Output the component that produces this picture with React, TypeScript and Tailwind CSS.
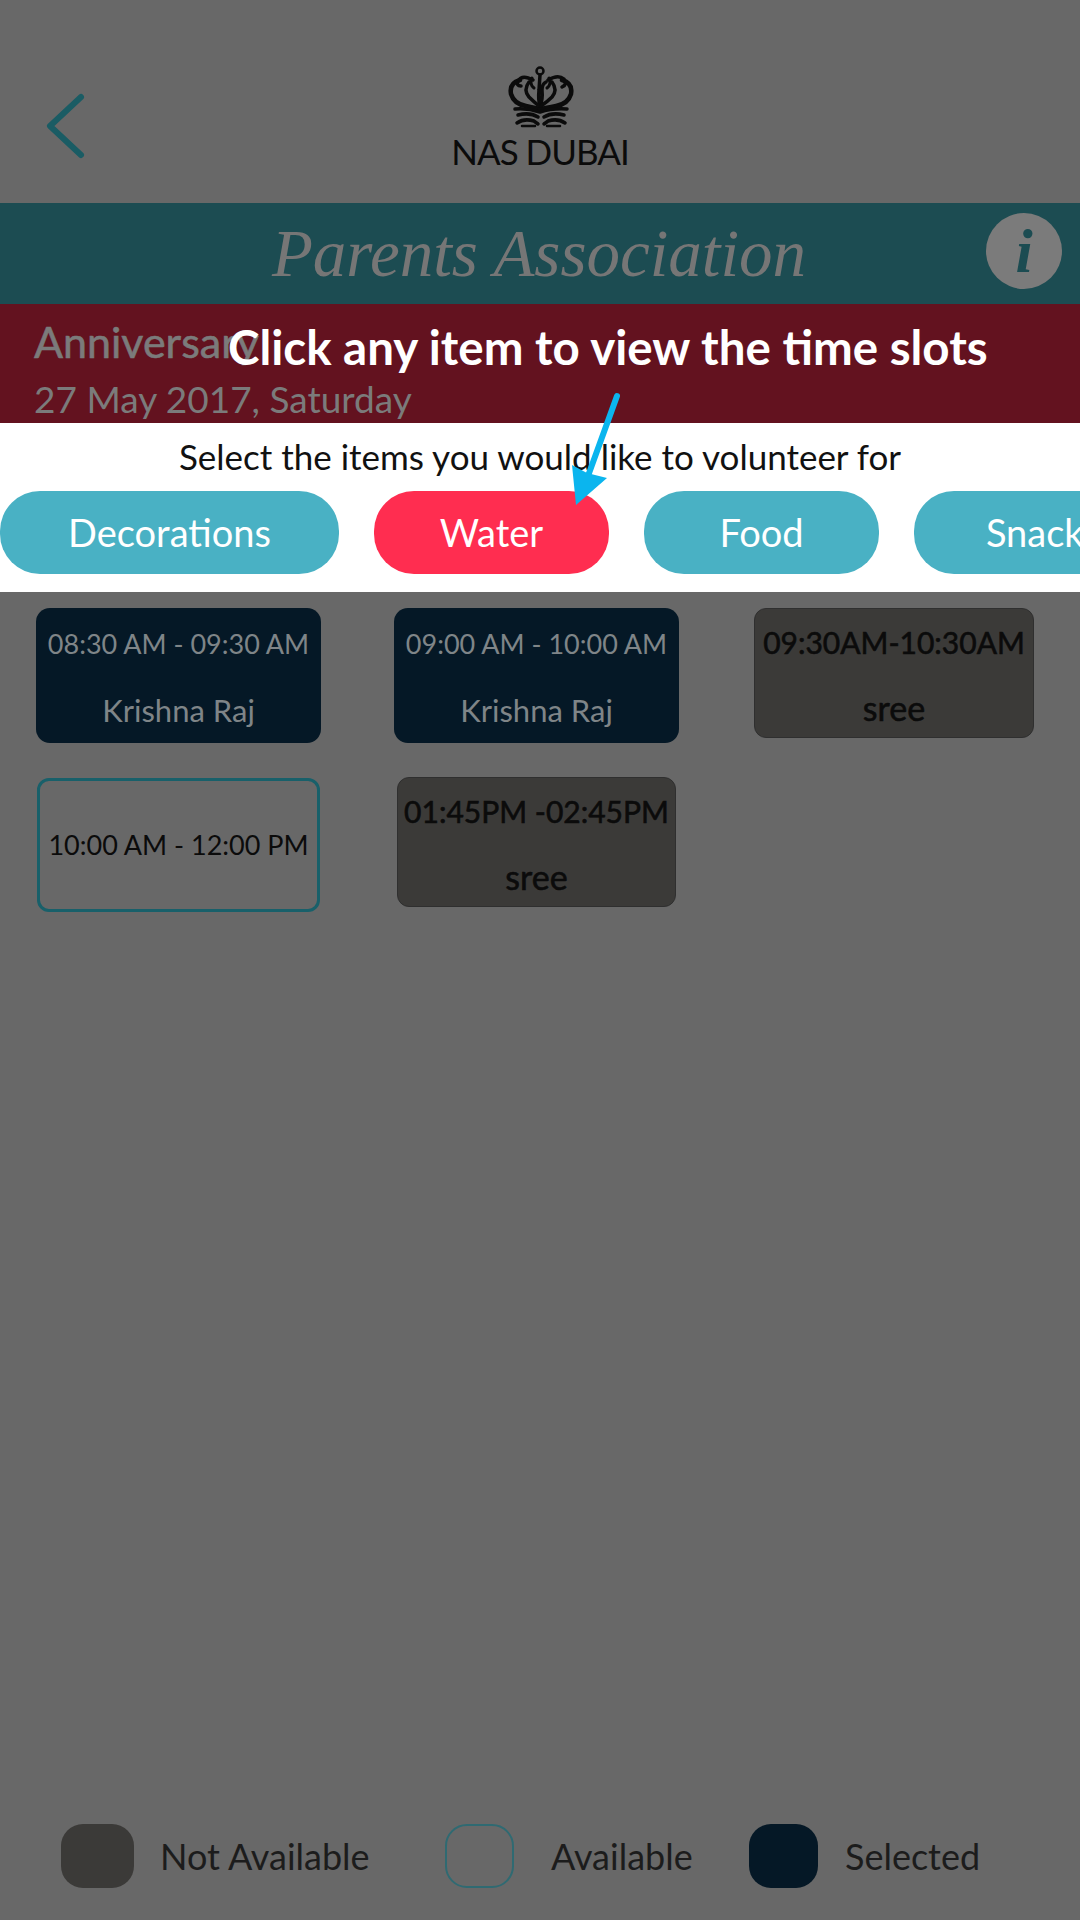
const sans = "font-['Lato','Noto_Sans',sans-serif]";

const Crown = () => (
  <svg width="66" height="62" viewBox="0 0 66 62" fill="none" stroke="#0b0b0b" strokeLinecap="round" className="block">
    <circle cx="32" cy="5" r="3.5" strokeWidth="2.5" />
    <path d="M32 9 L31 24 Q30 34 32 40 Q35 34 34 24 Q34 18 38 16" strokeWidth="3.5" />
    <path d="M25 14 Q14 8 10 15 Q8 20 13 20" strokeWidth="3.5" />
    <path d="M40 14 Q50 8 56 13 Q60 18 54 21" strokeWidth="3.5" />
    <path d="M12 14 Q1 17 3 28 Q6 38 18 40 Q27 42 32 43" strokeWidth="4.5" />
    <path d="M54 14 Q65 17 63 28 Q60 38 48 40 Q38 42 32 43" strokeWidth="4.5" />
    <path d="M21 16 Q15 24 21 31 Q26 36 31 40" strokeWidth="3.5" />
    <path d="M44 16 Q50 24 44 31 Q39 36 33 40" strokeWidth="3.5" />
    <path d="M24 12 Q21 18 26 22" strokeWidth="3" />
    <path d="M41 12 Q44 18 39 22" strokeWidth="3" />
    <path d="M7 43 Q20 42 32 46 Q44 42 59 43" strokeWidth="3.5" />
    <path d="M10 49 Q22 46 30 51 M56 49 Q44 46 36 51" strokeWidth="3.5" />
    <path d="M9 57 Q16 52 26 55 L30 58 M57 57 Q50 52 40 55 L36 58" strokeWidth="3.5" />
    <path d="M14 60 L27 60 M39 60 L52 60" strokeWidth="2.5" />
  </svg>
);

// booked slots (navy)
const BookedSlot = ({ time, name, className }: { time: string; name: string; className: string }) => (
  <div className={`flex flex-col items-center shrink-0 h-[135px] w-[285px] rounded-[14px] bg-[#051826] text-[#7f8588] whitespace-nowrap ${className}`}>
    <span className="mt-[22px] text-[27px] leading-none">{time}</span>
    <span className="mt-[38px] text-[31px] leading-none">{name}</span>
  </div>
);

// slots taken by someone else (dark grey)
const TakenSlot = ({ time, name, className }: { time: string; name: string; className: string }) => (
  <div className={`flex flex-col items-center shrink-0 h-[130px] rounded-[12px] bg-[#3b3a38] border border-[#2f2f2f] text-[#0b0b0b] whitespace-nowrap [-webkit-text-stroke:0.6px_#0b0b0b] ${className}`}>
    <span className="mt-[18px] text-[30px] leading-none">{time}</span>
    <span className="mt-[34px] text-[34px] leading-none">{name}</span>
  </div>
);

const Pill = ({ label, className }: { label: string; className: string }) => (
  <div className={`h-[83px] shrink-0 rounded-[40px] flex items-center justify-center text-white text-[38px] ${className}`}>
    {label}
  </div>
);

export default function App() {
  return (
    <div className={`relative w-[1080px] h-[1920px] overflow-hidden bg-[#686868] flex flex-col ${sans}`}>
      {/* top bar */}
      <div className="h-[203px] shrink-0 relative flex flex-col items-center">
        <svg width="44" height="68" viewBox="0 0 44 68" fill="none" className="absolute left-[44px] top-[92px]">
          <path d="M37 5 L6 34 L37 63" stroke="#1a5c64" strokeWidth="6" strokeLinecap="round" strokeLinejoin="round" />
        </svg>
        <div className="mt-[66px] ml-[1px]">
          <Crown />
        </div>
        <div className="mt-[3px] text-[35px] leading-[40px] tracking-[-1px] text-[#0b0b0b] whitespace-nowrap">NAS DUBAI</div>
      </div>

      {/* title */}
      <div className="h-[101px] shrink-0 bg-[#1c4c52] relative flex items-center justify-center">
        <span className="text-[67px] leading-none italic text-[#767676] font-['Liberation_Serif',serif] mr-[2px]">
          Parents Association
        </span>
        <div className="absolute right-[18px] top-[10px] w-[76px] h-[76px] rounded-full bg-[#7b7b7b] flex items-center justify-center text-[#1c4c52] text-[62px] leading-none font-bold italic font-['Liberation_Serif',serif]">
          i
        </div>
      </div>

      {/* event */}
      <div className="h-[119px] shrink-0 bg-[#63121f] pl-[34px] pt-[13px] text-[#7b7b7b]">
        <div className="text-[43px] leading-[50px] [-webkit-text-stroke:0.6px_#7b7b7b]">Anniversary</div>
        <div className="text-[37px] leading-[42px] mt-[11px]">27 May 2017, Saturday</div>
      </div>

      {/* item picker */}
      <div className="h-[169px] shrink-0 bg-white">
        <div className="h-[67px] mb-[1px] flex items-center justify-center text-[35px] text-[#111] whitespace-nowrap">
          Select the items you would like to volunteer for
        </div>
        <div className="flex gap-[35px]">
          <Pill label="Decorations" className="w-[339px] bg-[#49b1c4]" />
          <Pill label="Water" className="w-[235px] bg-[#ff2d50]" />
          <Pill label="Food" className="w-[235px] bg-[#49b1c4]" />
          <Pill label="Snacks" className="w-[258px] bg-[#49b1c4]" />
        </div>
      </div>

      {/* slots */}
      <div className="pt-[16px] pl-[36px] flex items-start">
        <BookedSlot time="08:30 AM - 09:30 AM" name="Krishna Raj" className="" />
        <BookedSlot time="09:00 AM - 10:00 AM" name="Krishna Raj" className="ml-[73px]" />
        <TakenSlot time="09:30AM-10:30AM" name="sree" className="ml-[75px] w-[280px]" />
      </div>
      <div className="pt-[34px] pl-[37px] flex items-start">
        <div className="mt-[1px] shrink-0 w-[283px] h-[134px] rounded-[12px] border-[3px] border-[#18606a] text-[#0b0b0b] text-[27px] flex items-center justify-center whitespace-nowrap">
          10:00 AM - 12:00 PM
        </div>
        <TakenSlot time="01:45PM -02:45PM" name="sree" className="ml-[77px] w-[279px]" />
      </div>

      {/* legend */}
      <div className="mt-auto mb-[32px] h-[64px] flex items-center text-[36px] text-[#1c1c1c] whitespace-nowrap">
        <div className="ml-[61px] w-[73px] h-[64px] rounded-[22px] bg-[#3b3a38]" />
        <span className="ml-[26px] w-[206px]">Not Available</span>
        <div className="ml-[79px] w-[69px] h-[64px] rounded-[22px] border-2 border-[#2f6a72]" />
        <span className="ml-[37px] w-[143px]">Available</span>
        <div className="ml-[55px] w-[69px] h-[64px] rounded-[22px] bg-[#051826]" />
        <span className="ml-[27px]">Selected</span>
      </div>

      {/* coach mark */}
      <div className="absolute left-[228px] top-[322px] text-white font-bold text-[47.5px] leading-[50px] whitespace-nowrap">
        Click any item to view the time slots
      </div>
      <svg width="1080" height="1920" viewBox="0 0 1080 1920" className="absolute left-0 top-0 pointer-events-none">
        <path d="M617 396 L588 476" stroke="#0bb5ee" strokeWidth="6" strokeLinecap="round" />
        <path d="M576 505 L572 465 L587 473 L607 478 Z" fill="#0bb5ee" />
      </svg>
    </div>
  );
}
